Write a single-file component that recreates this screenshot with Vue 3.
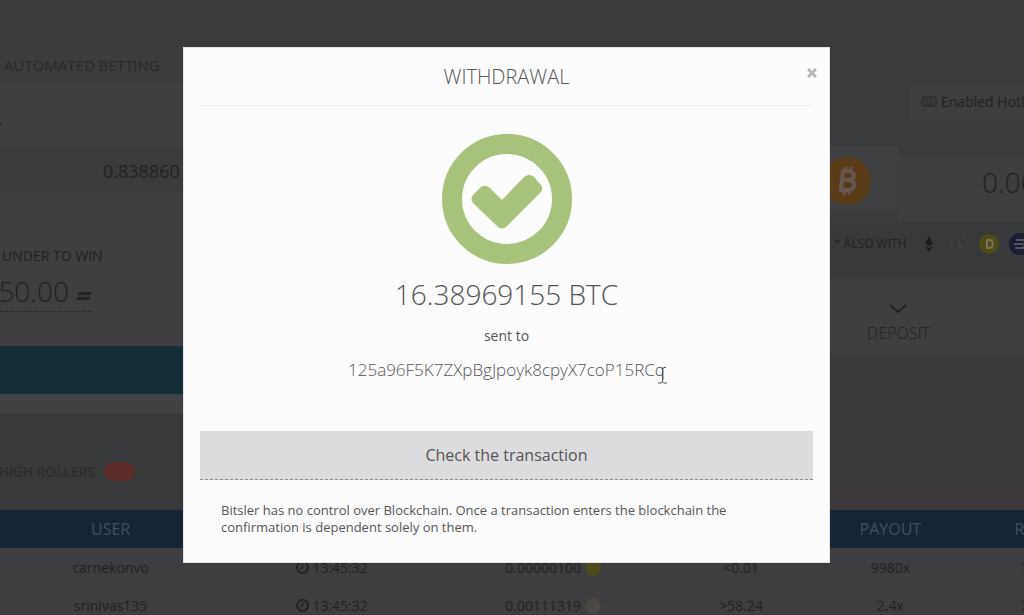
<script setup>
const bets = [
  { user: 'carnekonvo', time: '13:45:32', amount: '0.00000100', coin: 'gold', roll: '<0.01', payout: '9980x', result: '12.4' },
  { user: 'srinivas135', time: '13:45:32', amount: '0.00111319', coin: 'grey', roll: '>58.24', payout: '2.4x', result: '75.1' },
]
</script>

<template>
  <div class="page">
    <main class="board">
      <section class="bet">
        <nav class="tabs"><a href="#auto">AUTOMATED BETTING</a></nav>
        <div class="stake"><span>.</span></div>
        <div class="profit"><output>0.838860</output></div>
        <div class="chance">
          <p class="label">UNDER TO WIN</p>
          <div class="target">
            <span>50.00</span>
            <svg width="14" height="10" viewBox="0 0 14 10" fill="currentColor">
              <path d="M0 3 4 0V1H14V4H4V5ZM14 7 10 10V9H0V6H10V5Z" />
            </svg>
          </div>
        </div>
        <button class="rollbtn" type="button" aria-label="Roll dice"></button>
        <div class="rollers">
          <div class="rollers-label"><span>HIGH ROLLERS</span></div>
          <i class="badge"></i>
        </div>
      </section>

      <section class="wallet">
        <button class="hotkeys" type="button">
          <svg width="16" height="11" viewBox="0 0 16 11" fill="none" stroke="currentColor">
            <rect x="1" y="1" width="14" height="9" rx="1.500" />
            <path d="M3 3.500H13M3 5.500H13" stroke-dasharray="1.500 1" />
            <path d="M4 8H12" />
          </svg>
          <span>Enabled Hotkeys</span>
        </button>
        <div class="balance">
          <div class="coinbox">
            <svg width="48" height="48" viewBox="0 0 48 48">
              <circle cx="24" cy="24" r="24" fill="#5b3c18" />
              <g fill="none" stroke="#66564f" stroke-width="4">
                <path d="M18 14H25C33 14 33 23 25 23H19M25 23C34 23 33 33 25 33H16M20 14 18 33" />
                <path d="M23 10V14M28 10V15M21 33V38M26 33V37" stroke-width="3" />
              </g>
            </svg>
          </div>
          <div class="sum">0.00000000</div>
        </div>
        <div class="also">
          <span>* ALSO WITH</span>
          <div class="coins">
            <svg width="8" height="16" viewBox="0 0 8 16" fill="#1d1d21"><path d="M4 0 8 8 4 10 0 8ZM0 10 4 12 8 10 4 16Z" /></svg>
            <svg width="20" height="20" viewBox="0 0 20 20" fill="none" stroke="#433c40" stroke-width="2"><circle cx="10" cy="10" r="8" /><path d="M10 5V13H14" /></svg>
            <svg width="20" height="20" viewBox="0 0 20 20"><circle cx="10" cy="10" r="10" fill="#4f4a16" /><path d="M8 6H10C15 6 15 14 10 14H8V6" fill="none" stroke="#77735a" stroke-width="2" /></svg>
            <svg width="22" height="22" viewBox="0 0 22 22"><circle cx="11" cy="11" r="11" fill="#191d35" /><path d="M7 7H16L15 15H6M5 11H14" fill="none" stroke="#54565f" stroke-width="2" /></svg>
          </div>
        </div>
        <div class="actions">
          <button class="deposit" type="button">
            <svg width="18" height="10" viewBox="0 0 18 10" fill="none" stroke="#202022" stroke-width="2"><path d="M1 1 9 8 17 1" /></svg>
            <span>DEPOSIT</span>
          </button>
        </div>
        <div class="rest"></div>
      </section>
    </main>

    <table class="bets">
      <thead>
        <tr><th>USER</th><th aria-label="Time"></th><th aria-label="Bet"></th><th class="narrow" aria-label="Game"></th><th class="small">PAYOUT</th><th class="small">ROLL</th></tr>
      </thead>
      <tbody>
        <tr v-for="b in bets" :key="b.user">
          <td><a href="#user">{{ b.user }}</a></td>
          <td>
            <svg class="clock" width="13" height="13" viewBox="0 0 13 13" fill="none" stroke="currentColor" stroke-width="2"><circle cx="6.500" cy="6.500" r="5.500" /><path d="M6.500 3V7H4" stroke-width="1.500" /></svg>
            {{ b.time }}
          </td>
          <td><span class="amount">{{ b.amount }}</span> <i class="dot" :class="b.coin"></i></td>
          <td>{{ b.roll }}</td>
          <td>{{ b.payout }}</td>
          <td>{{ b.result }}</td>
        </tr>
      </tbody>
    </table>

    <div class="overlay">
      <div class="modal" role="dialog" aria-labelledby="title">
        <header class="head">
          <h1 id="title">WITHDRAWAL</h1>
          <button class="close" type="button" aria-label="Close">
            <svg width="10" height="10" viewBox="0 0 10 10" stroke="#b8b8b8" stroke-width="3"><path d="M1 1 9 9M9 1 1 9" /></svg>
          </button>
        </header>
        <svg class="tick" width="130" height="130" viewBox="0 0 130 130">
          <circle cx="65" cy="65" r="55" fill="none" stroke="#a7c27a" stroke-width="20" />
          <path d="M31 61 39 53Q43 50 48 54L60 66 82 43Q87 39 92 43L99 51Q102 55 98 59L65 92Q60 97 55 92L31 69Q28 65 31 61Z" fill="#a7c27a" />
        </svg>
        <p class="total">16.38969155 BTC</p>
        <p class="sent">sent to</p>
        <p class="address">
          <span>125a96F5K7ZXpBgJpoyk8cpyX7coP15RCq</span>
          <svg class="caret" width="9" height="17" viewBox="0 0 9 17" fill="none" stroke="#555"><path d="M1 .5H3L4.500 2 6 .5H8M4.500 2V15M0 16H3L4.500 15 6 16H9" /></svg>
        </p>
        <button class="check" type="button">Check the transaction</button>
        <p class="note">Bitsler has no control over Blockchain. Once a transaction enters the blockchain the confirmation is dependent solely on them.</p>
      </div>
    </div>
  </div>
</template>

<style>
body { background: #3a3b3d; }
</style>

<style scoped>
* { box-sizing: border-box; }
.page {
  position: relative;
  min-height: 100vh;
  max-height: 100vh;
  overflow: hidden;
  background: #3a3b3d;
  color: #222224;
  font-family: "Open Sans", "Noto Sans", sans-serif;
  font-size: 14px;
}
p, h1 { margin: 0; font-weight: 400; }
a { color: inherit; text-decoration: none; }
button { font: inherit; color: inherit; border: 0; padding: 0; background: none; }
svg { display: block; flex: none; }

.board { display: grid; grid-template-columns: 1fr 194px; padding-top: 47px; }
.bet { background: #403e40; }
.tabs { height: 37px; padding-left: 4px; line-height: 36px; background: #3d3b3e; color: #2a292b; font-size: 15px; }
.stake { height: 64px; line-height: 68px; font-size: 18px; }
.stake span { margin-left: -2px; }
.profit { height: 44px; padding-left: 103px; line-height: 46px; background: #3b3b3d; font-size: 18px; }
.chance { height: 154px; padding-top: 54px; }
.label { padding-left: 2px; line-height: 20px; }
.target {
  display: flex; align-items: center; justify-content: flex-end; gap: 8px;
  width: 91px; height: 46px; padding-top: 4px;
  border-bottom: 1px dashed #29282a; font-size: 28px; font-weight: 300;
}
.target svg { margin-top: 10px; }
.rollbtn { display: block; width: 100%; height: 48px; background: #142d37; }
.rollers { display: flex; align-items: center; gap: 9px; height: 116px; border-top: 19px solid #404143; background: #38393a; padding-top: 20px; }
.rollers-label { display: flex; justify-content: flex-end; width: 95px; color: #2a2b2c; }
.rollers-label span { white-space: nowrap; }
.badge { width: 31px; height: 19px; border-radius: 10px; background: #5c2c29; }

.wallet { display: flex; flex-direction: column; background: #3a3b3d; overflow: hidden; }
.hotkeys {
  display: flex; align-items: center; gap: 4px; height: 35px;
  margin: 37px 0 27px 79px; padding-left: 12px; background: #3e3e40; white-space: nowrap;
}
.balance { display: flex; height: 76px; }
.coinbox { width: 68px; height: 63px; padding-top: 11px; background: #3f4042; }
.coinbox svg { margin-left: -7px; }
.sum { flex: 1; margin-top: 9px; padding-left: 84px; line-height: 54px; background: #3e3d3f; font-size: 28px; font-weight: 300; overflow: hidden; }
.also { display: flex; align-items: center; gap: 18px; height: 57px; padding: 0 0 14px 4px; background: #38393b; font-size: 12px; white-space: nowrap; }
.coins { display: flex; align-items: center; gap: 10px; }
.coins svg:first-child { margin-right: 6px; }
.actions { height: 74px; padding-left: 37px; background: #403e40; }
.deposit { display: flex; flex-direction: column; align-items: center; gap: 3px; padding-top: 25px; font-size: 16px; font-weight: 300; line-height: 32px; }
.rest { flex: 1; background: #3b393b; }

.bets { width: calc(100% + 82px); table-layout: fixed; border-collapse: collapse; text-align: center; }
.bets th { width: 20%; height: 38px; padding: 0; background: #152535; color: #3f4f60; font-size: 16px; font-weight: 400; }
.bets th.narrow { width: 14%; }
.bets th.small { width: 13%; }
.bets td { height: 38px; padding: 0; background: #3e3d3f; }
.clock { display: inline-block; vertical-align: -1px; }
.dot { display: inline-block; width: 16px; height: 16px; border-radius: 8px; vertical-align: -3px; }
.gold { background: #4d4a1c; }
.grey { background: #4a4744; }

.overlay { position: absolute; inset: 0; padding: 47px 11px 0 0; }
.modal {
  width: 647px; max-width: 100%; margin: 0 auto; padding: 0 16px 26px;
  background: #fcfcfd; border: 1px solid #e4e4e4; color: #555; text-align: center;
}
.head { position: relative; height: 58px; border-bottom: 1px solid #ececec; }
.head h1 { line-height: 58px; font-size: 20px; font-weight: 300; }
.close { position: absolute; top: 20px; right: -4px; }
.tick { margin: 28px auto 0; }
.total { margin-top: 9px; line-height: 42px; font-size: 28px; font-weight: 300; }
.sent { margin-top: 11px; line-height: 20px; }
.address { width: fit-content; position: relative; margin: 10px auto 0; line-height: 28px; font-size: 17px; font-weight: 300; }
.caret { position: absolute; right: -2px; bottom: 0; }
.check { display: block; width: 100%; height: 49px; margin-top: 47px; background: #dcdbdd; border-bottom: 1px dashed #8c8c8c; font-size: 16px; }
.note { padding: 22px 80px 0 21px; line-height: 17px; font-size: 13px; text-align: left; }
</style>
